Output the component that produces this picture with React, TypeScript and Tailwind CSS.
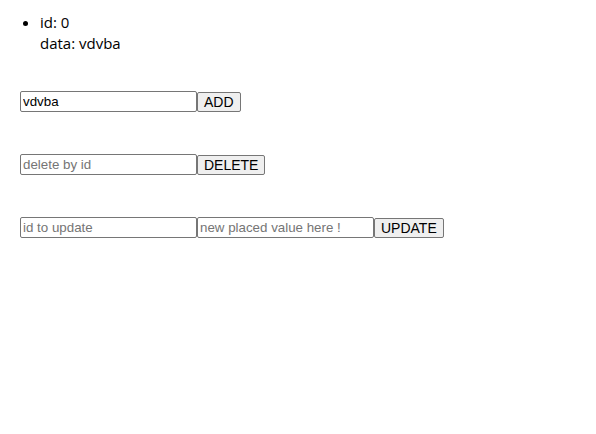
import React, { useState } from 'react';

type Item = { id: number; data: string };

const inputCls =
  'w-[177px] h-[21px] border border-[#767676] rounded-[2px] px-[2px] text-[13.33px] text-black placeholder:text-[#757575] bg-white outline-none';
const btnCls =
  'h-[20px] border border-[#767676] rounded-[2px] bg-[#efefef] px-[6px] text-[14px] leading-none text-black';

const App: React.FC = () => {
  const [items] = useState<Item[]>([{ id: 0, data: 'vdvba' }]);
  const [value, setValue] = useState('vdvba');

  return (
    <div className="w-[596px] h-[434px] bg-white text-black" style={{ fontFamily: '"Open Sans", "Noto Sans", sans-serif' }}>
      <ul className="list-disc pl-[40px] pt-[12px] text-[15px] leading-[21px]">
        {items.map((it) => (
          <li key={it.id}>
            <div>id: {it.id}</div>
            <div>data: {it.data}</div>
          </li>
        ))}
      </ul>

      <div className="pl-[20px] font-['Liberation_Sans',Arial,sans-serif]">
        <div className="flex items-center mt-[37px]">
          <input className={inputCls} value={value} onChange={(e) => setValue(e.target.value)} />
          <button className={btnCls}>ADD</button>
        </div>

        <div className="flex items-center mt-[42px]">
          <input className={inputCls} placeholder="delete by id" />
          <button className={btnCls}>DELETE</button>
        </div>

        <div className="flex items-center mt-[42px]">
          <input className={inputCls} placeholder="id to update" />
          <input className={inputCls} placeholder="new placed value here !" />
          <button className={btnCls}>UPDATE</button>
        </div>
      </div>
    </div>
  );
};

export default App;
